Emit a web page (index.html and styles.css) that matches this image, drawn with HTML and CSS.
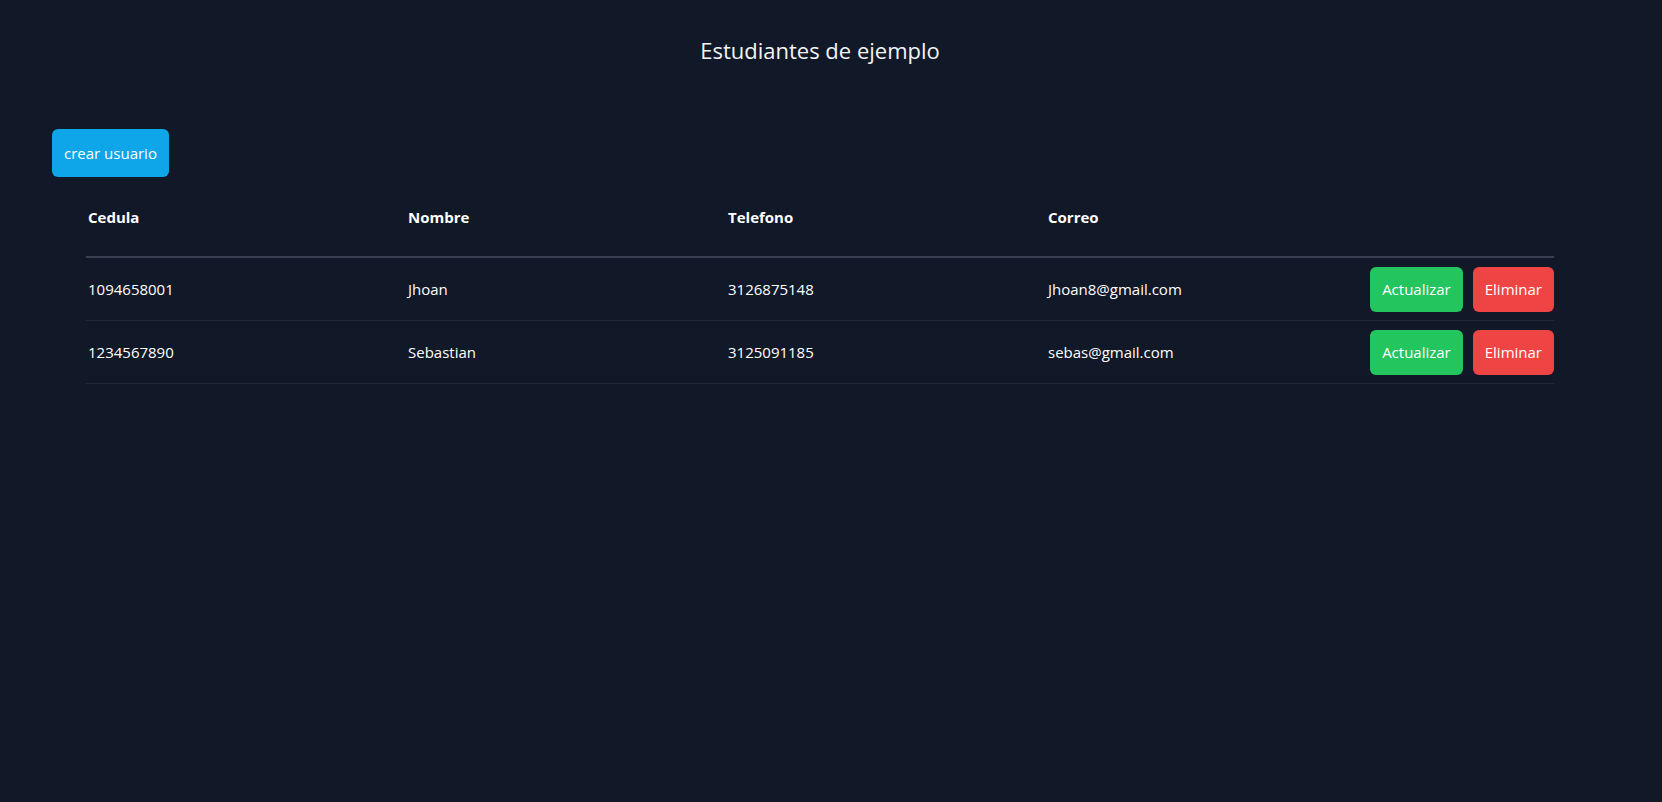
FILE: index.html
```html
<!DOCTYPE html>
<html lang="es">
<head>
<meta charset="utf-8">
<title>Estudiantes de ejemplo</title>
<link rel="stylesheet" href="styles.css">
</head>
<body>
<div class="page">
  <h1 class="title">Estudiantes de ejemplo</h1>
  <button class="btn btn-create">crear usuario</button>
  <div class="table">
    <div class="row head">
      <div class="cell">Cedula</div>
      <div class="cell">Nombre</div>
      <div class="cell">Telefono</div>
      <div class="cell">Correo</div>
      <div class="cell"></div>
    </div>
    <div class="row">
      <div class="cell">1094658001</div>
      <div class="cell">Jhoan</div>
      <div class="cell">3126875148</div>
      <div class="cell">Jhoan8@gmail.com</div>
      <div class="cell actions">
        <button class="btn btn-update">Actualizar</button>
        <button class="btn btn-delete">Eliminar</button>
      </div>
    </div>
    <div class="row">
      <div class="cell">1234567890</div>
      <div class="cell">Sebastian</div>
      <div class="cell">3125091185</div>
      <div class="cell">sebas@gmail.com</div>
      <div class="cell actions">
        <button class="btn btn-update">Actualizar</button>
        <button class="btn btn-delete">Eliminar</button>
      </div>
    </div>
  </div>
</div>
</body>
</html>
```
FILE: styles.css
```css
* { box-sizing: border-box; }
html, body {
  margin: 0;
  background: #111827;
  color: #ffffff;
  font-family: "Open Sans", "Noto Sans", sans-serif;
  font-size: 15px;
  line-height: 24px;
}
body { min-height: 802px; }
.page {
  padding: 0 74px 0 52px;
}
.title {
  margin: 34px 0 0;
  font-size: 22px;
  line-height: 32px;
  font-weight: 400;
  text-align: center;
  color: #f3f4f6;
}
.btn {
  font-family: inherit;
  font-size: 15px;
  line-height: 24px;
  color: #ffffff;
  border: 0;
  border-radius: 6px;
  padding: 0 12px;
  cursor: pointer;
}
.btn-create {
  display: block;
  margin-top: 63px;
  height: 48px;
  background: #0ea5e9;
}
.table {
  margin: 0 34px;
}
.row {
  display: grid;
  grid-template-columns: 320px 320px 320px 320px minmax(0, 1fr);
  align-items: center;
  border-bottom: 1px solid #1f2937;
  height: 63px;
}
.row.head {
  height: auto;
  padding: 28px 0 27px;
  border-bottom: 2px solid #374151;
  font-weight: 700;
}
.cell {
  padding-left: 2px;
}
.actions {
  display: flex;
  justify-content: flex-end;
  gap: 10px;
  padding-left: 0;
}
.btn-update {
  height: 45px;
  background: #22c55e;
}
.btn-delete {
  height: 45px;
  background: #ef4444;
}
```
